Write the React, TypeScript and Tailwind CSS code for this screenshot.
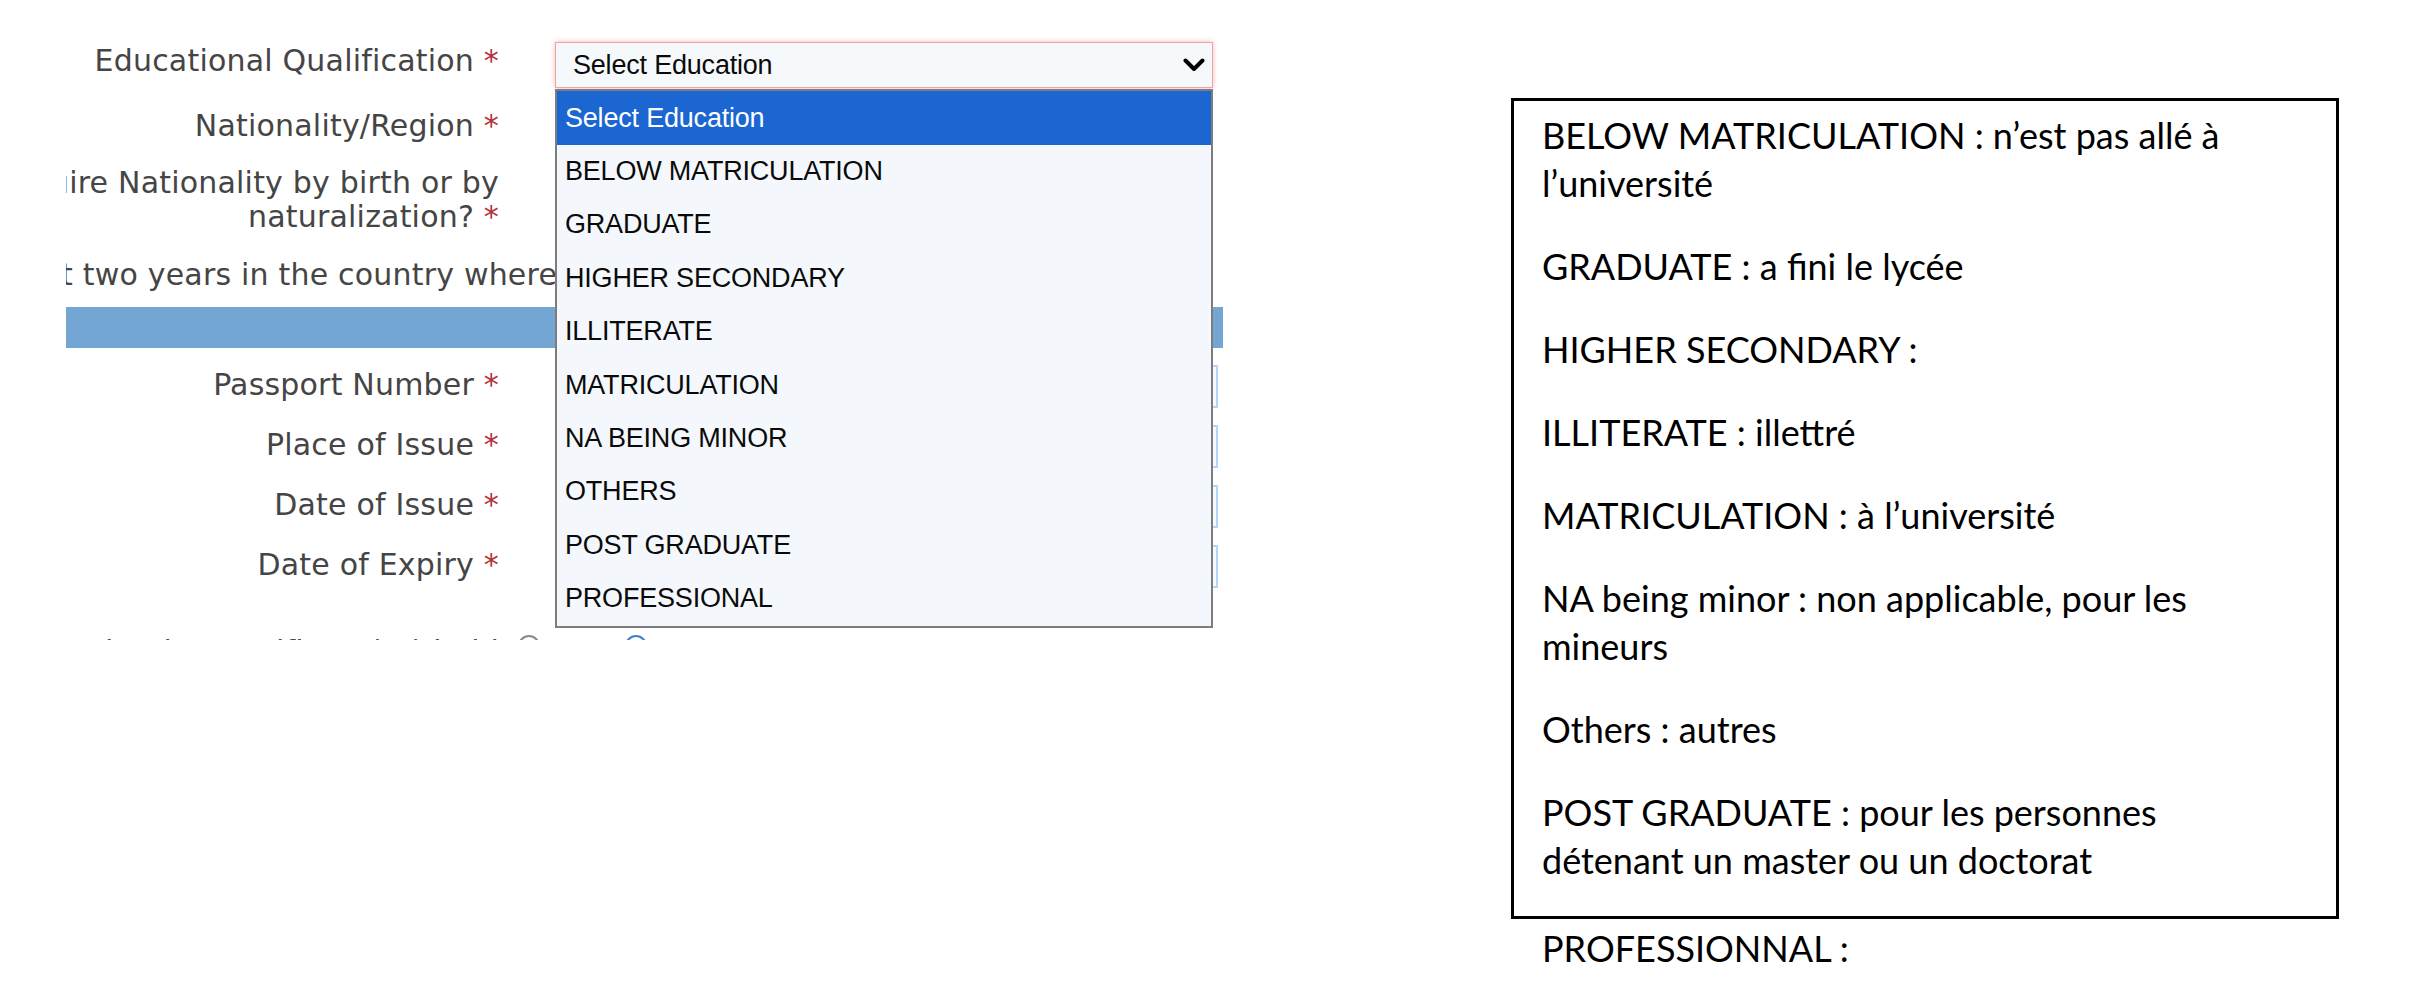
import React from "react";

const educationOptions = [
  "BELOW MATRICULATION",
  "GRADUATE",
  "HIGHER SECONDARY",
  "ILLITERATE",
  "MATRICULATION",
  "NA BEING MINOR",
  "OTHERS",
  "POST GRADUATE",
  "PROFESSIONAL",
];

const notes: string[][] = [
  ["BELOW MATRICULATION : n\u2019est pas allé à", "l\u2019université"],
  ["GRADUATE : a fini le lycée"],
  ["HIGHER SECONDARY :"],
  ["ILLITERATE : illettré"],
  ["MATRICULATION : à l\u2019université"],
  ["NA being minor : non applicable, pour les", "mineurs"],
  ["Others : autres"],
  ["POST GRADUATE : pour les personnes", "détenant un master ou un doctorat"],
];

function Req() {
  return <span className="text-[#b3333b]"> *</span>;
}

function Label({ children, pad }: { children: React.ReactNode; pad: string }) {
  return (
    <div className={`w-[433px] shrink-0 overflow-hidden flex justify-end ${pad}`}>
      <div className="shrink-0 whitespace-nowrap text-right">{children}</div>
    </div>
  );
}

function Chevron() {
  return (
    <svg width="22" height="14" viewBox="0 0 22 14" className="shrink-0">
      <path d="M2.5 2.5 L11 11 L19.5 2.5" fill="none" stroke="#000" strokeWidth="4" strokeLinecap="round" strokeLinejoin="round" />
    </svg>
  );
}

function EducationSelect() {
  return (
    <div className="relative w-[658px] h-[46px] shrink-0">
      <div className="flex items-center justify-between w-full h-full border border-[#f2a3a3] shadow-[0_0_5px_rgba(240,90,90,0.45)] bg-[#f5f9fc] pl-[17px] pr-[7px] font-['Liberation_Sans',Arial,sans-serif] text-[27px] text-[#0a0a0a] tracking-[-0.2px]">
        <span>Select Education</span>
        <Chevron />
      </div>
      <div className="absolute left-0 top-[47px] z-10 w-[658px] border-2 border-[#7d7d7d] bg-[#f4f8fc] font-['Liberation_Sans',Arial,sans-serif] text-[27px] text-[#0a0a0a] tracking-[-0.2px]">
        <div className="h-[54px] leading-[54px] pl-[8px] bg-[#1b66d1] text-white">Select Education</div>
        {educationOptions.map((o) => (
          <div key={o} className="h-[53.4px] leading-[53.4px] pl-[8px]">
            {o}
          </div>
        ))}
      </div>
    </div>
  );
}

function TextInput() {
  return <div className="w-[663px] h-[43px] shrink-0 border-2 border-[#b3d6f8] bg-[#f6fafd]" />;
}

function FormPanel() {
  return (
    <div className="w-[1240px] h-[640px] shrink-0 overflow-hidden pl-[66px] pt-[42px] font-['DejaVu_Sans',Verdana,sans-serif] text-[30px] leading-[34px] tracking-[0.2px] text-[#454545]">
      <div className="flex h-[65px]">
        <Label pad="pt-[2px]">
          Educational Qualification<Req />
        </Label>
        <div className="ml-[56px]">
          <EducationSelect />
        </div>
      </div>

      <div className="flex h-[57px]">
        <Label pad="pt-[2px]">
          Nationality/Region<Req />
        </Label>
      </div>

      <div className="flex h-[93px]">
        <Label pad="pt-[2px]">
          Did you acquire Nationality by birth or by
          <br />
          naturalization?<Req />
        </Label>
      </div>

      <div className="h-[50px] w-[1150px] overflow-hidden pt-[1px]">
        <div className="ml-[-5px] whitespace-nowrap">
          t two years in the country where you are applying visa?<Req />
        </div>
      </div>

      <div className="w-[1157px] h-[41px] bg-[#74a6d4]" />

      <div className="mt-[17px]">
        {["Passport Number", "Place of Issue", "Date of Issue", "Date of Expiry"].map((l) => (
          <div key={l} className="flex h-[60px]">
            <Label pad="pt-[3px]">
              {l}
              <Req />
            </Label>
            <div className="ml-[56px]">
              <TextInput />
            </div>
          </div>
        ))}
      </div>

      <div className="flex">
        <Label pad="pt-[30px]">Any other valid Passport/Identity Certificate(IC) held</Label>
        <div className="flex items-start pt-[30px] ml-[19px] gap-[85px]">
          <div className="w-[22px] h-[22px] rounded-full border-2 border-[#8a8a8a] bg-white" />
          <div className="w-[22px] h-[22px] rounded-full border-2 border-[#3d83c9] bg-white flex items-center justify-center">
            <div className="w-[10px] h-[10px] rounded-full bg-[#3d83c9]" />
          </div>
        </div>
      </div>
    </div>
  );
}

function NotesPanel() {
  return (
    <div className="ml-[271px] pt-[98px] font-['Lato',sans-serif] text-[36px] leading-[48px] text-black">
      <div className="w-[828px] border-[3px] border-black pt-[10px] pl-[28px] pb-[32px]">
        {notes.map((lines, i) => (
          <p key={i} className={i < notes.length - 1 ? "mb-[35px]" : ""}>
            {lines.map((line, j) => (
              <span key={j} className="block whitespace-nowrap">
                {line}
              </span>
            ))}
          </p>
        ))}
      </div>
      <p className="mt-[5px] pl-[31px] whitespace-nowrap">PROFESSIONNAL :</p>
    </div>
  );
}

export default function App() {
  return (
    <div className="flex w-[2420px] h-[984px] bg-white overflow-hidden">
      <FormPanel />
      <NotesPanel />
    </div>
  );
}
